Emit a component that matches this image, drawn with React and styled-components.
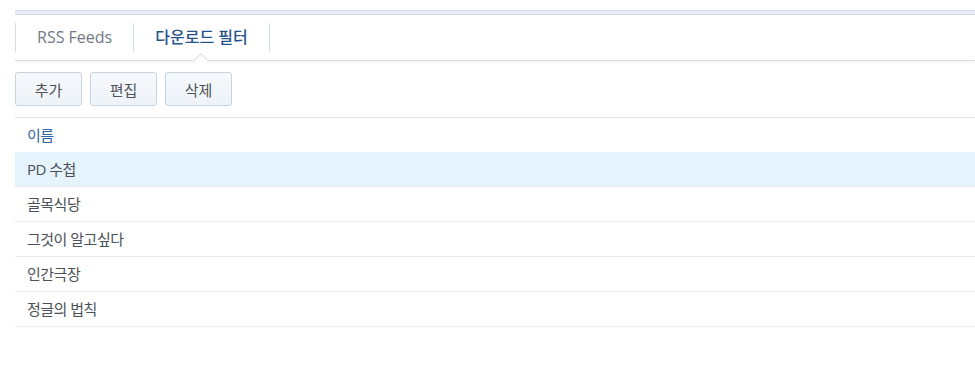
import React from "react";
import styled, { createGlobalStyle } from "styled-components";

const GlobalStyle = createGlobalStyle`
  html, body {
    margin: 0;
    padding: 0;
    background: #ffffff;
  }
  body {
    font-family: "Open Sans", "Noto Sans CJK KR", sans-serif;
  }
`;

const Page = styled.div`
  padding: 10px 0 0 15px;
`;

const TopStrip = styled.div`
  height: 3px;
  background: #e6edf5;
  border-top: 1px solid #d3dce7;
  border-bottom: 1px solid #cdd8e4;
`;

const TabBar = styled.div`
  position: relative;
  display: flex;
  align-items: center;
  height: 45px;
  background: #ffffff;
  border-bottom: 1px solid #dedede;
  box-shadow: 0 2px 2px rgba(0, 0, 0, 0.04);
`;

const Tab = styled.div`
  position: relative;
  height: 29px;
  line-height: 29px;
  padding: 0 21px;
  border-left: 1px solid #d6dfe9;
  font-size: 16px;
  color: ${(p) => (p.active ? "#27538b" : "#717a84")};
  font-weight: ${(p) => (p.active ? 500 : 400)};
  &:last-child {
    border-right: 1px solid #d6dfe9;
  }
  ${(p) =>
    p.active &&
    `
    &::after {
      content: "";
      position: absolute;
      left: 50%;
      bottom: -13px;
      width: 9px;
      height: 9px;
      margin-left: -5px;
      background: #ffffff;
      border-left: 1px solid #dedede;
      border-top: 1px solid #dedede;
      transform: rotate(45deg);
      z-index: 2;
    }
  `}
`;

const Toolbar = styled.div`
  display: flex;
  gap: 8px;
  padding: 11px 0;
`;

const Button = styled.button`
  width: 67px;
  height: 34px;
  border: 1px solid #c7d3df;
  border-radius: 3px;
  background: linear-gradient(#f6f9fc, #eef3f8);
  font-family: "Open Sans", "Noto Sans CJK KR", sans-serif;
  font-size: 15px;
  color: #4f5358;
  padding: 0;
`;

const Grid = styled.div`
  border-top: 1px solid #dde4ea;
`;

const HeaderRow = styled.div`
  height: 34px;
  line-height: 34px;
  padding-left: 12px;
  font-size: 15px;
  letter-spacing: -0.5px;
  color: #2f65a0;
`;

const Row = styled.div`
  height: 34px;
  line-height: 34px;
  padding-left: 12px;
  font-size: 15px;
  letter-spacing: -0.5px;
  color: #4b5157;
  background: ${(p) => (p.selected ? "#e5f3fd" : "#ffffff")};
  border-bottom: 1px solid #e8ecf0;
`;

const filters = ["PD 수첩", "골목식당", "그것이 알고싶다", "인간극장", "정글의 법칙"];

const App = () => {
  return (
    <Page>
      <GlobalStyle />
      <TopStrip />
      <TabBar>
        <Tab>RSS Feeds</Tab>
        <Tab active>다운로드 필터</Tab>
      </TabBar>
      <Toolbar>
        <Button>추가</Button>
        <Button>편집</Button>
        <Button>삭제</Button>
      </Toolbar>
      <Grid>
        <HeaderRow>이름</HeaderRow>
        {filters.map((name, i) => (
          <Row key={name} selected={i === 0}>
            {name}
          </Row>
        ))}
      </Grid>
    </Page>
  );
};

export default App;
